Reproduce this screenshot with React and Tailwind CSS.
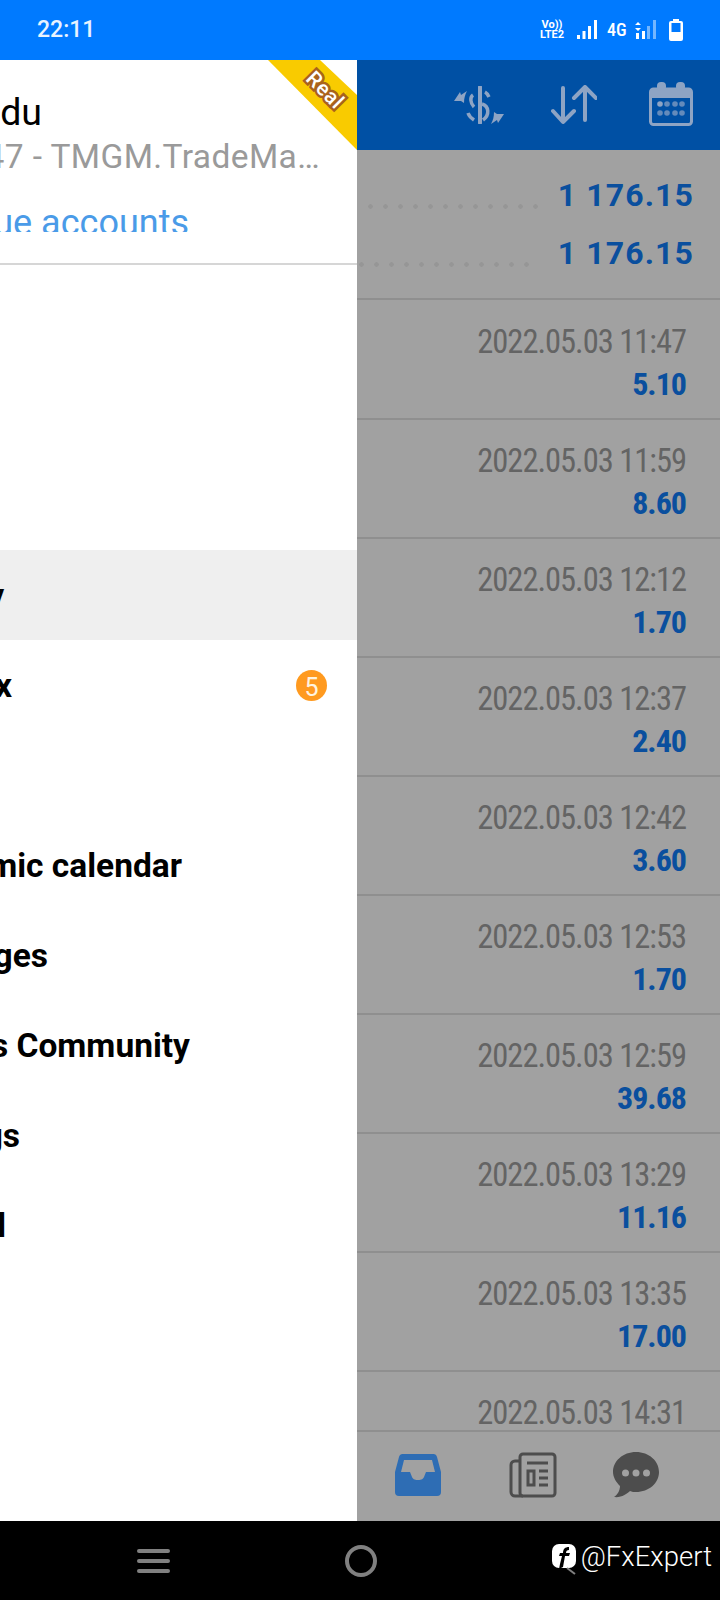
const rows = [
  ["2022.05.03 11:47", "5.10"],
  ["2022.05.03 11:59", "8.60"],
  ["2022.05.03 12:12", "1.70"],
  ["2022.05.03 12:37", "2.40"],
  ["2022.05.03 12:42", "3.60"],
  ["2022.05.03 12:53", "1.70"],
  ["2022.05.03 12:59", "39.68"],
  ["2022.05.03 13:29", "11.16"],
  ["2022.05.03 13:35", "17.00"],
];

// the drawer is slid left, only the tail of each label shows
const menu = [
  { label: "y", end: "w-[4px]", active: true },
  { label: "x", end: "w-[12px]", badge: 5 },
  { label: "", end: "w-[4px]" },
  { label: "mic calendar", end: "w-[182px]" },
  { label: "ges", end: "w-[48px]" },
  { label: "s Community", end: "w-[190px]" },
  { label: "gs", end: "w-[20px]" },
  { label: "l", end: "w-[6px]" },
];

function StatusIcons() {
  return (
    <div className="flex items-center text-white">
      <div className="flex w-[24px] flex-col items-center text-[11px] leading-[10px] font-bold">
        <span>Vo))</span>
        <span className="whitespace-nowrap">LTE2</span>
      </div>
      <svg className="ml-[13px]" width="20" height="20" viewBox="0 0 20 20" fill="#fff">
        <rect x="0" y="15" width="3" height="4" />
        <rect x="5.5" y="11" width="3" height="8" />
        <rect x="11" y="6" width="3" height="13" />
        <rect x="17" y="0" width="3" height="19" />
      </svg>
      <span className="ml-[10px] w-[20px] text-[18px] leading-none font-medium whitespace-nowrap [font-stretch:75%]">4G</span>
      <svg className="ml-[8px]" width="21" height="20" viewBox="0 0 21 20" fill="#fff">
        <path d="M3 2l3 3H0zM3 11L0 8h6z" />
        <rect x="1" y="13" width="3" height="6" />
        <rect x="7" y="11" width="3" height="8" />
        <rect x="12" y="6" width="3" height="13" opacity="0.45" />
        <rect x="18" y="0" width="3" height="19" opacity="0.45" />
      </svg>
      <svg className="ml-[13px]" width="14" height="22" viewBox="0 0 14 22">
        <path d="M4 0h6v2h2a2 2 0 0 1 2 2v16a2 2 0 0 1-2 2H2a2 2 0 0 1-2-2V4a2 2 0 0 1 2-2h2z" fill="#fff" />
        <rect x="2.5" y="4" width="9" height="9" fill="#007aff" />
      </svg>
    </div>
  );
}

function HeaderIcons() {
  const c = "#8ea4c4";
  return (
    <div className="flex items-center">
      <svg width="50" height="38" viewBox="0 0 50 38" fill="none">
        <path d="M26 1v36" stroke={c} strokeWidth="4" strokeLinecap="round" />
        <path d="M19 9c-3 2-3 8 1 12M31 6c2 1 3 3 4 5M28 18c7 2 8 11 1 16M14 27c1 3 3 5 6 7" stroke={c} strokeWidth="3.5" />
        <path d="M0 15l6-9 1 3 6-4c-2 4-3 7-3 12l-3-2z" fill={c} />
        <path d="M0 15l6-9 1 3 6-4c-2 4-3 7-3 12l-3-2z" transform="rotate(180 25 21.5)" fill={c} />
      </svg>
      <svg className="ml-[47px]" width="46" height="40" viewBox="0 0 46 40" fill="none" stroke={c} strokeWidth="4" strokeLinecap="round" strokeLinejoin="round">
        <path d="M12 3v33M2 26l10 11 11-11" />
        <path d="M34 2v33M23 13L34 2l11 11" />
      </svg>
      <svg className="mb-[2px] ml-[52px]" width="44" height="44" viewBox="0 0 44 44">
        <rect x="1.5" y="7" width="41" height="35.5" rx="3" fill="none" stroke={c} strokeWidth="3" />
        <rect x="1.5" y="7" width="41" height="9" fill={c} />
        <rect x="8" y="0" width="9" height="9" rx="4" fill={c} />
        <rect x="27" y="0" width="9" height="9" rx="4" fill={c} />
        <g fill={c}>
          <circle cx="11" cy="22" r="2.8" />
          <circle cx="18" cy="22" r="2.8" opacity=".7" />
          <circle cx="26" cy="22" r="2.8" opacity=".7" />
          <circle cx="33" cy="22" r="2.8" opacity=".7" />
          <circle cx="11" cy="31" r="2.8" opacity=".7" />
          <circle cx="18" cy="31" r="2.8" opacity=".7" />
          <circle cx="26" cy="31" r="2.8" opacity=".7" />
          <circle cx="33" cy="31" r="2.8" opacity=".7" />
        </g>
      </svg>
    </div>
  );
}

function TotalRow({ mr }) {
  return (
    <div className="flex h-[58px] items-center justify-end">
      <div className={`${mr} mt-[22px] h-[5px] w-[180px] shrink-0 bg-[radial-gradient(circle,#969696_2px,transparent_2.5px)] bg-[length:15px_5px]`} />
      <span className="text-[32px] font-bold tracking-[1.1px] whitespace-nowrap text-[#0a4f9e]">1 176.15</span>
    </div>
  );
}

function BottomIcons() {
  return (
    <div className="flex h-[91px] shrink-0 items-center border-t-2 border-[#8f8f8f] pb-[3px] pl-[38px]">
      <svg width="46" height="42" viewBox="0 0 46 42">
        <path d="M8 0h30a4 4 0 0 1 4 3l4 15v20a4 4 0 0 1-4 4H4a4 4 0 0 1-4-4V18L4 3a4 4 0 0 1 4-3z" fill="#2e6db4" />
        <path d="M9 6h28l3 12H31l-2 5c-1 2-2 3-6 3s-5-1-6-3l-2-5H6z" fill="#a1a1a1" />
      </svg>
      <svg className="ml-[68px]" width="48" height="46" viewBox="0 0 48 46" fill="none" stroke="#4d4d4d" strokeWidth="3">
        <rect x="11" y="2" width="35" height="42" rx="3" />
        <path d="M11 9H6a4 4 0 0 0-4 4v27a4 4 0 0 0 4 4h8" />
        <path d="M18 11h21" strokeWidth="3" />
        <rect x="19" y="19" width="6" height="14" />
        <path d="M30 19h9M30 26h9M30 33h9" />
      </svg>
      <svg className="ml-[56px]" width="46" height="46" viewBox="0 0 46 46">
        <path d="M23 0c13 0 23 9 23 20S36 40 23 40c-2 0-4 0-6-1-3 3-9 7-16 6 3-2 6-6 6-11C3 30 0 25 0 20 0 9 10 0 23 0z" fill="#4d4d4d" />
        <circle cx="12.5" cy="21" r="3.5" fill="#a1a1a1" />
        <circle cx="23" cy="21" r="3.5" fill="#a1a1a1" />
        <circle cx="33.5" cy="21" r="3.5" fill="#a1a1a1" />
      </svg>
    </div>
  );
}

export default function App() {
  return (
    <div className="flex h-[1600px] w-[720px] flex-col overflow-hidden bg-black font-['Roboto',sans-serif]">
      <div className="flex h-[60px] shrink-0 items-center justify-between bg-[#007aff] px-[37px]">
        <span className="text-[23px] font-medium text-[#e8f3ff]">22:11</span>
        <StatusIcons />
      </div>

      <div className="flex h-[1461px] shrink-0">
        {/* drawer */}
        <div className="relative h-full w-[357px] shrink-0 overflow-hidden bg-white">
          <div className="h-[205px] overflow-hidden border-b-2 border-[#d6d6d6]">
            <div className="mt-[29px] flex h-[46px] w-[42px] justify-end text-[37.5px] leading-[46px] text-black">du</div>
            <div className="mt-[1px] flex h-[42px] items-center justify-end pr-[37px] text-[33.5px] tracking-[0.4px] whitespace-nowrap text-[#9a9a9a]">
              47 - TMGM.TradeMa…
            </div>
            <div className="mt-[20px] flex h-[34px] w-[189px] justify-end overflow-hidden text-[36px] leading-[50px] whitespace-nowrap text-[#4a9be8]">
              <span className="shrink-0">ue accounts</span>
            </div>
          </div>

          <div className="absolute top-0 right-0 h-[90px] w-[90px] bg-[#f9cb00] [clip-path:polygon(1px_0,53px_0,100%_35px,100%_100%)]" />
          <span className="absolute top-[19px] right-[1px] w-[62px] rotate-[45deg] text-center text-[21px] leading-[22px] font-medium tracking-[0.5px] text-white [-webkit-text-stroke:5px_#a9621c] [paint-order:stroke_fill]">
            Real
          </span>

          <div className="flex flex-col">
            <div className="h-[285px]" />
            {menu.map((m, i) => (
              <div key={i} className={`flex h-[90px] items-center justify-between pt-[3px] pr-[30px] text-[33.5px] font-bold text-black ${m.active ? "bg-[#efefef]" : ""}`}>
                <div className={`${m.end} flex justify-end whitespace-nowrap`}>
                  <span className="shrink-0">{m.label}</span>
                </div>
                {m.badge && (
                  <span className="mb-[2px] flex h-[31px] w-[31px] items-center justify-center rounded-full bg-[#ff9a1f] pt-[4px] text-[25px] font-normal text-[#fff4e0]">
                    {m.badge}
                  </span>
                )}
              </div>
            ))}
          </div>
        </div>

        {/* dimmed history panel */}
        <div className="flex h-full min-w-0 flex-1 flex-col overflow-hidden bg-[#a1a1a1]">
          <div className="flex h-[90px] shrink-0 items-center justify-end bg-[#0050a4] pr-[27px]">
            <HeaderIcons />
          </div>
          <div className="min-h-0 flex-1 overflow-hidden">
            <div className="flex h-[150px] flex-col justify-center overflow-hidden border-b-2 border-[#8f8f8f] pr-[26px]">
              <TotalRow mr="mr-[15px]" />
              <TotalRow mr="mr-[24px]" />
            </div>
            {rows.map(([date, val], i) => (
              <div key={date} className={`flex ${i === 0 ? "h-[120px] pt-[21px]" : "h-[119px] pt-[20px]"} flex-col items-end border-b-2 border-[#8f8f8f] pr-[34px] leading-[42px]`}>
                <span className="text-[32.5px] tracking-[-1px] whitespace-nowrap text-[#646464] [font-stretch:75%]">{date}</span>
                <span className="text-[32px] font-bold tracking-[-1px] whitespace-nowrap text-[#0a4f9e] [font-stretch:75%]">{val}</span>
              </div>
            ))}
            <div className="flex h-[60px] justify-end pt-[20px] pr-[34px] leading-[42px]">
              <span className="text-[32.5px] tracking-[-1px] whitespace-nowrap text-[#646464] [font-stretch:75%]">2022.05.03 14:31</span>
            </div>
          </div>
          <BottomIcons />
        </div>
      </div>

      {/* nav bar */}
      <div className="relative flex h-[79px] shrink-0 items-center bg-black">
        <div className="ml-[137px] flex w-[33px] flex-col gap-[6px]">
          <div className="h-[4px] rounded bg-[#808080]" />
          <div className="h-[4px] rounded bg-[#808080]" />
          <div className="h-[4px] rounded bg-[#808080]" />
        </div>
        <div className="ml-[175px] h-[32px] w-[32px] rounded-full border-[4px] border-[#808080]" />
        <div className="absolute top-[23px] right-[8px] flex items-start text-white">
          <svg width="25" height="31" viewBox="0 0 25 31">
            <rect x="0" y="0" width="24" height="24" rx="7" fill="#fff" />
            <path d="M17 3c-4 0-6 2-6 6H8l-1 3h3l-2 8-1 5 4-2 2-11h4l1-3h-4c0-2 1-3 3-3z" fill="#000" />
            <path d="M15 24l8 6" stroke="#808080" strokeWidth="2" />
          </svg>
          <span className="ml-[4px] text-[27.5px] leading-[26px] font-light whitespace-nowrap">@FxExpert</span>
        </div>
      </div>
    </div>
  );
}
